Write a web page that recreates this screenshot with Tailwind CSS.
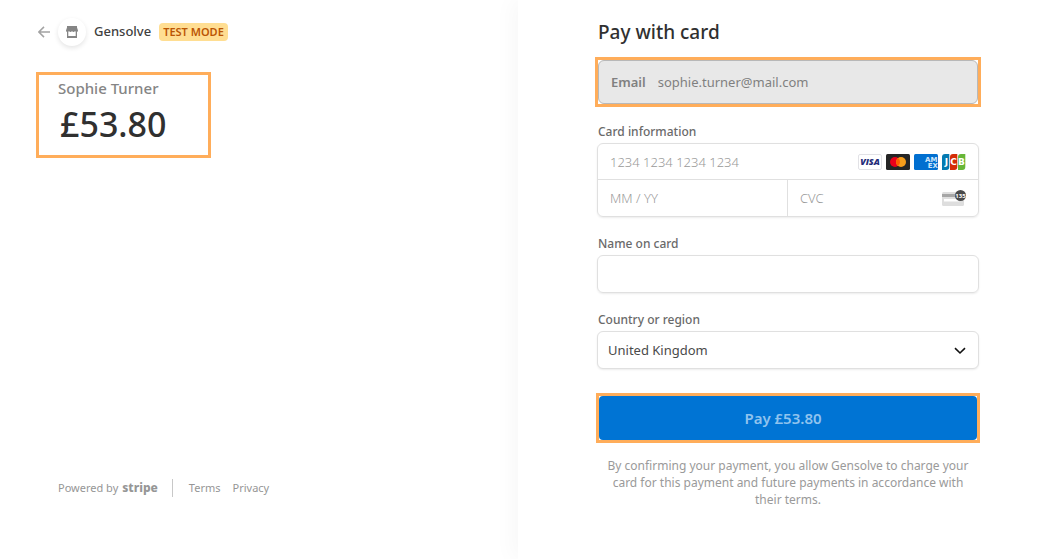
<!doctype html>
<html lang="en">
	<head>
		<meta charset="UTF-8" />
		<meta name="viewport" content="width=device-width, initial-scale=1.0" />
		<title>Gensolve checkout</title>
		<script src="https://cdn.jsdelivr.net/npm/@tailwindcss/browser@4"></script>
	</head>
	<body class="bg-white font-['Noto_Sans','Open_Sans',sans-serif] text-[#303030]">
		<div class="grid min-h-screen grid-cols-[518fr_546fr]">
			<!-- Order summary -->
			<section class="flex flex-col pt-[18px] pb-[62px] pl-9">
				<header class="flex h-7 items-center">
					<a href="#" aria-label="Back" class="flex w-[22px] text-[#a3a3a3]">
						<svg class="ml-0.5 h-3 w-3" viewBox="0 0 12 12" fill="none" stroke="currentColor" stroke-width="1.5">
							<path d="M12 6H1M6 .9L.9 6 6 11.1" />
						</svg>
					</a>
					<span class="flex size-7 items-center justify-center rounded-full bg-white shadow-[0_2px_5px_rgba(0,0,0,0.11)]">
						<svg class="h-3 w-3" viewBox="0 0 12 12" fill="#858585">
							<path d="M1 0h10v1.500l1 3c0 .9-.6 1.500-1.400 1.500-.7 0-1.300-.4-1.600-.9-.3.5-.8.9-1.500.9S6.300 5.600 6 5.100c-.3.5-.8.900-1.500.9S3.300 5.600 3 5.100c-.3.5-.9.9-1.600.9C.6 6 0 5.400 0 4.500l1-3z" />
							<path d="M1 5.500h1.300V10h7.400V5.500H11V12H1z" />
						</svg>
					</span>
					<span class="ml-2 text-[13px] font-medium text-[#404040]">Gensolve</span>
					<span class="ml-2 rounded bg-[#ffde92] px-1 text-[11px] leading-[18px] font-semibold text-[#bb5504]">TEST MODE</span>
				</header>

				<div class="mt-[26px] h-[86px] w-[175px] border-3 border-[#ffad5a] pt-[3px] pl-[19px]">
					<h1 class="text-[15px] leading-5 font-medium text-[#858585]">Sophie Turner</h1>
					<p class="ml-0.5 text-[34px] leading-[52px] font-medium">£53.80</p>
				</div>

				<footer class="mt-auto ml-[22px] flex h-[18px] items-center text-[11px] text-[#969696]">
					<span>Powered by</span>
					<span class="ml-1 text-[12px] leading-4 font-extrabold">stripe</span>
					<span class="mr-4 ml-3.5 h-[18px] w-px bg-[#c8c8c8]"></span>
					<a href="#">Terms</a>
					<a href="#" class="ml-3">Privacy</a>
				</footer>
			</section>

			<!-- Payment form -->
			<main class="bg-white pt-[18px] pr-[85px] pl-[79px] shadow-[-6px_0_20px_rgba(0,0,0,0.03)]">
				<form>
					<h2 class="ml-px text-[19px] leading-7 font-medium">Pay with card</h2>

					<div class="-mx-0.5 mt-[11px] border-3 border-[#ffad5a]">
						<div class="flex h-11 items-center rounded-md border border-[#b8b8b8] bg-[#e8e8e8] px-3 pt-0.5 text-[#808080]">
							<label for="email" class="text-[13px] font-semibold">Email</label>
							<input id="email" type="email" value="sophie.turner@mail.com" readonly class="ml-3 min-w-0 flex-1 bg-transparent text-[13px] outline-none" />
						</div>
					</div>

					<fieldset class="mt-4">
						<legend class="ml-px pt-px text-[12px] leading-4 font-medium text-[#6a6a6a]">Card information</legend>
						<div class="mt-[3px] rounded-md border border-[#e0e0e0] shadow-[0_1px_2px_rgba(0,0,0,0.08)]">
							<div class="flex h-9 items-center border-b border-[#e0e0e0] pr-3 pl-3">
								<input type="text" aria-label="Card number" placeholder="1234 1234 1234 1234" class="min-w-0 flex-1 pt-0.5 text-[13px] font-light outline-none placeholder:text-[#999]" />
								<div class="flex gap-1">
									<svg class="h-4 w-6" viewBox="0 0 24 16">
										<rect x=".5" y=".5" width="23" height="15" rx="1.500" fill="#fff" stroke="#e2e2e6" />
										<text x="12" y="11.200" text-anchor="middle" font-family="Open Sans" font-size="9" font-weight="800" font-style="italic" fill="#232b78">VISA</text>
									</svg>
									<svg class="h-4 w-6" viewBox="0 0 24 16">
										<rect width="24" height="16" rx="1.500" fill="#252525" />
										<circle cx="9" cy="8" r="5" fill="#eb001b" />
										<circle cx="15" cy="8" r="5" fill="#f79e1b" />
										<path d="M12 4a5 5 0 0 1 0 8a5 5 0 0 1 0-8" fill="#ff5f00" />
									</svg>
									<svg class="h-4 w-6" viewBox="0 0 24 16">
										<rect width="24" height="16" rx="1.500" fill="#016fd0" />
										<g font-family="DejaVu Sans" font-size="7" font-weight="700" fill="#cfe6fa" text-anchor="end">
											<text x="23.500" y="7.500">AM</text>
											<text x="24" y="14">EX</text>
										</g>
									</svg>
									<svg class="h-4 w-6" viewBox="0 0 24 16">
										<path d="M3 0h4.300v13a3 3 0 0 1-3 3H0V3a3 3 0 0 1 3-3z" fill="#047ab1" />
										<path d="M11 0h4.300v13a3 3 0 0 1-3 3H8V3a3 3 0 0 1 3-3z" fill="#d42d06" />
										<path d="M19 0h4.300v13a3 3 0 0 1-3 3H16V3a3 3 0 0 1 3-3z" fill="#67b637" />
										<g font-family="DejaVu Sans" font-size="9" font-weight="700" fill="#fff" text-anchor="middle">
											<text x="4.500" y="11">J</text>
											<text x="11.500" y="11">C</text>
											<text x="19.500" y="11">B</text>
										</g>
									</svg>
								</div>
							</div>
							<div class="grid h-9 grid-cols-2">
								<input type="text" aria-label="Expiry date" placeholder="MM / YY" class="min-w-0 border-r border-[#e0e0e0] pt-0.5 pl-3 text-[13px] font-light outline-none placeholder:text-[#999]" />
								<div class="flex items-center pr-3 pl-3">
									<input type="text" aria-label="CVC" placeholder="CVC" class="min-w-0 flex-1 pt-0.5 text-[13px] font-light outline-none placeholder:text-[#999]" />
									<svg class="h-4 w-6" viewBox="0 0 24 16">
										<rect y="2" width="22" height="14" rx="1.500" fill="#dedede" />
										<path d="M0 4h22v3H0z" fill="#a6a6a6" />
										<path d="M2 9h15v2.500H2z" fill="#fff" />
										<circle cx="18.500" cy="5.500" r="5.500" fill="#4a4a4a" />
										<text x="18.500" y="7.800" text-anchor="middle" font-family="Open Sans" font-size="6" font-weight="700" fill="#fff">135</text>
									</svg>
								</div>
							</div>
						</div>
					</fieldset>

					<label for="name" class="mt-[19px] ml-px block text-[12px] leading-4 font-medium text-[#6a6a6a]">Name on card</label>
					<input id="name" type="text" class="mt-[3px] block h-[38px] w-full rounded-md border border-[#e0e0e0] px-3 text-[13px] shadow-[0_1px_2px_rgba(0,0,0,0.08)] outline-none" />

					<label for="country" class="mt-[19px] ml-px block text-[12px] leading-4 font-medium text-[#6a6a6a]">Country or region</label>
					<div class="relative mt-[3px]">
						<select id="country" class="block h-[38px] w-full appearance-none rounded-md border border-[#e0e0e0] bg-white px-2.5 pt-0.5 text-[13px] text-[#4a4a4a] shadow-[0_1px_2px_rgba(0,0,0,0.08)]">
							<option>United Kingdom</option>
						</select>
						<svg class="pointer-events-none absolute top-4 right-3 h-2 w-3.5" viewBox="0 0 14 8" fill="none" stroke="#111" stroke-width="1.600">
							<path d="M2 1.200l5 4.800 5-4.800" />
						</svg>
					</div>

					<div class="-mx-px mt-6 border-3 border-[#ffad5a]">
						<button type="button" class="block h-11 w-full rounded bg-[#0074d4] pr-2.5 text-[15px] font-semibold text-[#8fc3ee]">Pay £53.80</button>
					</div>

					<p class="mt-3.5 px-1.5 text-center text-[12px] leading-[17px] text-[#9a9a9a]">
						By confirming your payment, you allow Gensolve to charge your card for this payment and future payments in accordance with their terms.
					</p>
				</form>
			</main>
		</div>
	</body>
</html>
